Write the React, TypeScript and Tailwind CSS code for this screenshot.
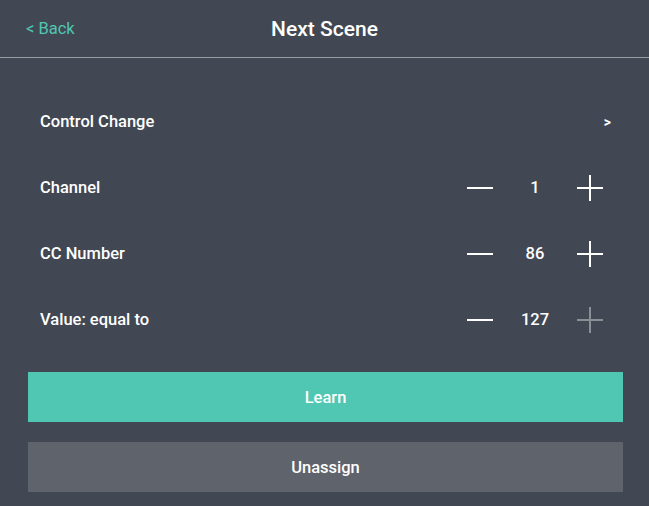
import React from "react";

function Minus() {
  return (
    <button className="w-[26px] h-[26px] flex items-center justify-center">
      <span className="block w-[26px] h-[2px] bg-white" />
    </button>
  );
}

function Plus({ disabled }: { disabled?: boolean }) {
  const color = disabled ? "bg-[#8b8e94]" : "bg-white";
  return (
    <button className="relative w-[26px] h-[26px]">
      <span className={`absolute left-0 top-[12px] w-[26px] h-[2px] ${color}`} />
      <span className={`absolute top-0 left-[12px] w-[2px] h-[26px] ${color}`} />
    </button>
  );
}

function Stepper({ label, value, max }: { label: string; value: number; max?: boolean }) {
  return (
    <div className="h-[66px] flex items-center justify-between pl-10 pr-[46px]">
      <span>{label}</span>
      <div className="flex items-center">
        <Minus />
        <span className="w-[84px] text-center">{value}</span>
        <Plus disabled={max} />
      </div>
    </div>
  );
}

export default function App() {
  return (
    <div
      className="w-[649px] h-[506px] bg-[#424853] text-white font-medium text-[16.5px]"
      style={{ fontFamily: "Roboto, 'Noto Sans', sans-serif" }}
    >
      {/* Header */}
      <div className="relative h-[58px] pt-[2px] border-b border-[#9a9da4] flex items-center justify-center">
        <button className="absolute left-[26px] top-[17px] text-[#4fc6b1] text-[16.5px] font-normal">
          &lt; Back
        </button>
        <h1 className="text-[21px] font-medium">Next Scene</h1>
      </div>

      {/* Rows */}
      <div className="pt-[31px]">
        <div className="h-[66px] flex items-center justify-between pl-10 pr-[38px]">
          <span>Control Change</span>
          <span className="text-sm font-bold">&gt;</span>
        </div>
        <Stepper label="Channel" value={1} />
        <Stepper label="CC Number" value={86} />
        <Stepper label="Value: equal to" value={127} max />
      </div>

      {/* Buttons */}
      <div className="ml-7 mr-[26px] pt-[19px] flex flex-col gap-5">
        <button className="h-[50px] pt-[2px] bg-[#4fc7b2] text-white">Learn</button>
        <button className="h-[50px] pt-[2px] bg-[#5f636b] text-white">Unassign</button>
      </div>
    </div>
  );
}
